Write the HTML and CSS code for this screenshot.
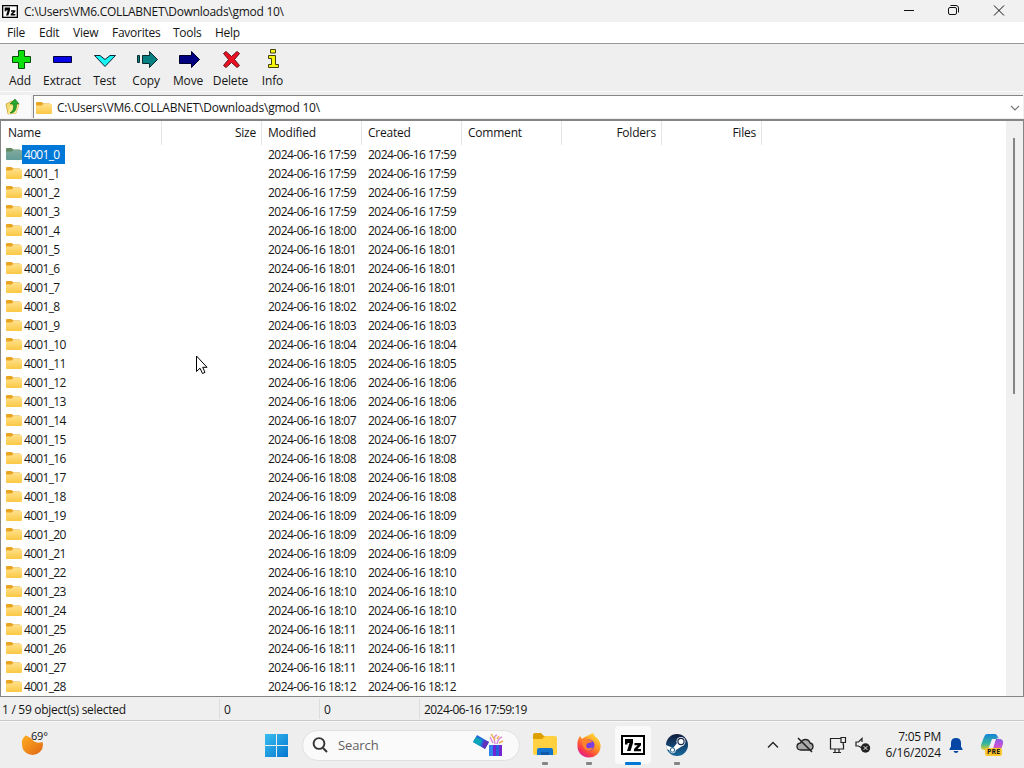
FILE: index.html
```html
<!DOCTYPE html>
<html lang="en">
<head>
<meta charset="utf-8">
<title>7-Zip</title>
<link rel="stylesheet" href="styles.css">
</head>
<body>
<svg class="defs" width="0" height="0">
  <defs>
    <linearGradient id="gold" x1="0" y1="0" x2="0" y2="1"><stop offset="0" stop-color="#ffe08a"/><stop offset="1" stop-color="#fbc843"/></linearGradient>
    <linearGradient id="teal" x1="0" y1="0" x2="0" y2="1"><stop offset="0" stop-color="#80a99c"/><stop offset="1" stop-color="#649c98"/></linearGradient>
    <symbol id="folder" viewBox="0 0 16 14"><path d="M0 2Q0 1 1 1H5.5L7.5 2.500H14V7H0Z" fill="#e9a520"/><path d="M0 4.600H5.6L7.3 3H15Q16 3 16 4V12Q16 13 15 13H1Q0 13 0 12Z" fill="url(#gold)"/></symbol>
    <symbol id="folder-sel" viewBox="0 0 16 14"><path d="M0 2Q0 1 1 1H5.5L7.5 2.500H14V7H0Z" fill="#638b60"/><path d="M0 4.600H5.6L7.3 3H15Q16 3 16 4V12Q16 13 15 13H1Q0 13 0 12Z" fill="url(#teal)"/></symbol>
    <symbol id="sevenzip" viewBox="0 0 24 20"><rect x="1" y="1" width="22" height="18" fill="#fff" stroke="#000" stroke-width="2"/><path d="M4 4H12V8L9.5 16H6L8.5 8H6.5V9.5H4Z" fill="#000"/><path d="M13.5 8H20V10.3L16.5 14H20V16.2H13V14L16.7 10.2H13.5Z" fill="#000"/></symbol>
  </defs>
</svg>
<div class="desktop">
  <header class="titlebar">
    <svg class="app-icon" width="16" height="13" viewBox="0 0 24 20" preserveAspectRatio="none"><use href="#sevenzip"/></svg>
    <span class="title">C:\Users\VM6.COLLABNET\Downloads\gmod 10\</span>
    <svg class="winctl" width="104" height="22" fill="none" stroke="#111" stroke-width="1"><path d="M4 10.500H14"/><path d="M50 7.500H55Q56.500 7.500 56.500 9V13Q56.500 14.500 55 14.500H50Q48.500 14.500 48.500 13V9Q48.500 7.500 50 7.500M50.500 5.500H56Q58.500 5.500 58.500 8V12.500"/><path d="M94 5.500L104 15.500M104 5.500L94 15.500"/></svg>
  </header>
  <nav class="menubar"><span class="m-file">File</span><span class="m-edit">Edit</span><span class="m-view">View</span><span class="m-fav">Favorites</span><span class="m-tools">Tools</span><span class="m-help">Help</span></nav>
  <div class="toolbar">
    <div class="tool t-add"><svg width="24" height="22"><path d="M9.500 1.500H15.500V7.500H21.500V13.500H15.500V19.500H9.500V13.500H3.500V7.500H9.500Z" fill="#0ee00e" stroke="#064d06"/></svg><span>Add</span></div>
    <div class="tool t-extract"><svg width="24" height="22"><path d="M4.500 7.500H22.500V13.500H4.500Z" fill="#0505e8" stroke="#00003c"/></svg><span>Extract</span></div>
    <div class="tool t-test"><svg width="24" height="22"><path d="M1.500 6.500H7L12 10.500L17 6.500H22.500L12 17.500Z" fill="#16f4f4" stroke="#123"/></svg><span>Test</span></div>
    <div class="tool t-copy"><svg width="24" height="22" fill="#068080" stroke="#052d2d"><path d="M3.500 6.500H5.500V13.500H3.500ZM8.500 6.500H15.500V2.500L23.500 10.500L15.500 18.500V14.500H8.500Z"/></svg><span>Copy</span></div>
    <div class="tool t-move"><svg width="24" height="22"><path d="M3.500 6.500H15.500V2.500L23.500 10.500L15.500 18.500V14.500H3.500Z" fill="#000080" stroke="#00002c"/></svg><span>Move</span></div>
    <div class="tool t-delete"><svg width="24" height="22"><path d="M5.500 4.500L8 2.500L13.500 7.500L19 2.500L21.500 4.500L16.500 10.500L21.500 16.500L19 18.500L13.500 13.500L8 18.500L5.500 16.500L10.500 10.500Z" fill="#ed1021" stroke="#69101a"/></svg><span>Delete</span></div>
    <div class="tool t-info"><svg width="24" height="22" fill="#f5f510" stroke="#444006"><path d="M10.500 .5H15.500V4H10.500ZM8.500 6.500H15.500V15.500H18.500V18.500H8.500V15.500H11.500V9.500H8.500Z"/></svg><span>Info</span></div>
  </div>
  <div class="address">
    <div class="up"><svg width="16" height="18" viewBox="0 0 16 18"><path d="M1 6L7 3L14 6L11 15L3 16Z" fill="#f2dc72" stroke="#c69a30" stroke-width=".7"/><path d="M3 16L5 8L14 6L11 15Z" fill="#ffea8c"/><path d="M5 15Q10 12 8 6H5L10 1L14 6H11.500Q12 13 7 15Z" fill="#27a52e" stroke="#147218" stroke-width=".6"/></svg></div>
    <div class="combo"><svg width="16" height="14"><use href="#folder"/></svg><span>C:\Users\VM6.COLLABNET\Downloads\gmod 10\</span><svg class="chev" width="10" height="6" fill="none" stroke="#777" stroke-width="1.200"><path d="M1 1L5 5L9 1"/></svg></div>
  </div>
  <main class="list">
    <div class="listbody">
      <div class="head"><span>Name</span><span class="r">Size</span><span>Modified</span><span>Created</span><span>Comment</span><span class="r">Folders</span><span class="r">Files</span></div>
      <div class="rows" id="rows"></div>
    </div>
    <div class="scroll"><div class="thumb"></div></div>
  </main>
  <footer class="status"><span>1 / 59 object(s) selected</span><span>0</span><span>0</span><span>2024-06-16 17:59:19</span></footer>
  <div class="taskbar">
    <div class="weather"><svg width="24" height="24"><defs><linearGradient id="sun" x1="0" y1="0" x2="1" y2="1"><stop offset="0" stop-color="#ffae22"/><stop offset="1" stop-color="#df6614"/></linearGradient></defs><path d="M4.500 3.500Q0 7 1 13A10.500 10 0 0 0 22 13L21.500 10Q16 12 12.500 9Q10 5 4.500 3.500Z" fill="url(#sun)"/></svg><span class="deg">69°</span></div>
    <svg class="start" width="23" height="23"><defs><linearGradient id="win" x1="0" y1="0" x2="1" y2="1"><stop offset="0" stop-color="#38bdf0"/><stop offset="1" stop-color="#0576cf"/></linearGradient></defs><path d="M0 0H11V11H0ZM12 0H23V11H12ZM0 12H11V23H0ZM12 12H23V23H12Z" fill="url(#win)"/></svg>
    <div class="search">
      <svg width="16" height="16" fill="none" stroke="#333" stroke-width="1.900"><circle cx="7" cy="6.500" r="5.400"/><path d="M11 11L15 15"/></svg><span>Search</span>
      <svg class="gift" width="32" height="24"><path d="M4 2L16 9L12 16L0 9Z" fill="#2269d9"/><path d="M3 4L9 7L7 13L0 9Z" fill="#0aa5b9"/><path d="M11 7L16 9L12 16L9 14Z" fill="#6130bd"/><path d="M16 12H29V23H16Z" fill="#2760dd"/><path d="M20 12H23V23H20ZM26 12H29V23H26Z" fill="#7525cf"/><path d="M16 12H20V23H16Z" fill="#3183ee"/><path d="M20 10L17 4M22 11Q20 3 24 2M24 11Q25 5 29 4" fill="none" stroke="#d88fd8" stroke-width="1.500"/><path d="M22 7L18 1M26 10L30 8M24 6L26 3" stroke="#efb657" stroke-width="1.400"/></svg>
    </div>
    <div class="apps">
      <div class="app"><svg width="26" height="26"><path d="M1 3Q1 1 3 1H9L12 4H22V10H1Z" fill="#dea000"/><path d="M1 7H10L13 4H23Q25 4 25 6V21Q25 23 23 23H3Q1 23 1 21Z" fill="#ffd140"/><path d="M5 23V18Q5 16 7 16H19Q21 16 21 18V23Z" fill="#1473cc"/><path d="M9 23V20H17V23" fill="#0e5aa8"/></svg></div>
      <div class="app"><svg width="26" height="26"><defs><linearGradient id="ff" x1=".9" y1="0" x2=".2" y2="1"><stop offset="0" stop-color="#ffec40"/><stop offset=".45" stop-color="#ff9224"/><stop offset=".75" stop-color="#fd3f43"/><stop offset="1" stop-color="#d817a1"/></linearGradient></defs><path d="M13 3L17 1Q18 4 21 6Q25 10 24.500 15A11.500 11 0 0 1 1.500 14Q1 8 4 4L6 7L9 5Z" fill="url(#ff)"/><circle cx="13" cy="13" r="5.500" fill="#793fe0"/><path d="M6 7Q10 5 13 8L17 9Q15 11 12 11Q9 13 11 16Q14 17 17 15Q15 20 10 18Q5 14 6 7Z" fill="#ff842c"/></svg></div>
      <div class="app active"><svg width="24" height="20"><use href="#sevenzip"/></svg></div>
      <div class="app"><svg width="24" height="24"><defs><linearGradient id="steam" x1="0" y1="0" x2="0" y2="1"><stop offset="0" stop-color="#101b3d"/><stop offset="1" stop-color="#17699d"/></linearGradient></defs><circle cx="12" cy="12" r="11" fill="url(#steam)"/><path d="M1 12L8 15L13 9L19 12L11 17Q10 21 6.500 20Q4.500 19 4 17L1.500 16Z" fill="#fff"/><circle cx="16" cy="8.500" r="4.500" fill="#fff"/><circle cx="16" cy="8.500" r="3.100" fill="#fff" stroke="#17294e" stroke-width="1.200"/><circle cx="7.500" cy="17" r="2.200" fill="none" stroke="#246491"/></svg></div>
    </div>
    <div class="tray">
      <svg class="up-chev" width="12" height="8" fill="none" stroke="#222" stroke-width="1.300"><path d="M1 6.500L6 1.500L11 6.500"/></svg>
      <svg class="cloud" width="18" height="16" fill="#aaa" stroke="#222" stroke-width="1.300"><path d="M5 13Q1 13 1 9.500Q1 6.500 4.500 6Q6 2.500 9.500 2.500Q13 2.500 14 6Q17 6.500 17 9.500Q17 13 13 13Z"/><path d="M2 1L16 15" stroke-width="1.600"/></svg>
      <svg class="net" width="18" height="18" fill="none" stroke="#222" stroke-width="1.200"><path d="M12 2.500H1.500V13H14.500V8.500M4 16.500H12M6 13V16M10 13V16M12 1.500H16.500V6.500H12ZM14.200 6.500V9"/></svg>
      <svg class="vol" width="16" height="17" fill="none" stroke="#222" stroke-width="1.200"><path d="M7 11L3.500 9H1V5H3.500L7 1.500V5"/><circle cx="10.500" cy="11" r="4.700" fill="#222" stroke="none"/><path d="M8.600 9.100L12.400 12.900M12.400 9.100L8.600 12.900" stroke="#eee" stroke-width="1"/></svg>
      <div class="clock"><span>7:05 PM</span><span class="date">6/16/2024</span></div>
      <svg class="bell" width="14" height="17"><path d="M2 6Q2 1 7 1T12 6V9.500L13.500 12V13H.5V12L2 9.500ZM4.500 14H9.500Q9 16 7 16T4.500 14Z" fill="#0647a5"/></svg>
      <div class="copilot"><svg width="24" height="24"><defs><linearGradient id="cp1" x1="0" y1="0" x2="0" y2="1"><stop offset="0" stop-color="#1683d8"/><stop offset=".6" stop-color="#37b69e"/><stop offset="1" stop-color="#e1cb26"/></linearGradient><linearGradient id="cp2" x1="0" y1="0" x2="0" y2="1"><stop offset="0" stop-color="#5963e5"/><stop offset=".5" stop-color="#bd53dc"/><stop offset="1" stop-color="#ff6c62"/></linearGradient></defs><path d="M7 1H15Q17 1 18 5L16 6H12L8 17H5Q0 17 1 12L4 4Q5 1 7 1Z" fill="url(#cp1)"/><path d="M14 1Q17 1 18 5L19 6H16L12 18H6Q7 22 10 22H15Q19 22 20 19L23 11Q24 6 19 6Q17 1 14 1Z" fill="url(#cp2)"/><path d="M12 8H15L13 15H10Z" fill="#f3edf7"/></svg><span class="pre">PRE</span></div>
    </div>
  </div>
  <svg class="cursor" width="13" height="20"><path d="M1.500 1V16.500L5 13.200L7.500 18.500L10 17.400L7.700 12.300H12Z" fill="#fff" stroke="#000"/></svg>
</div>
<script src="rows.js"></script>
</body>
</html>
```
FILE: styles.css
```css
* { box-sizing: border-box; }
body { margin: 0; background: #efefef; color: #151515; font: 12px/16px "Open Sans", "Noto Sans", sans-serif; letter-spacing: -.5px; }
svg { display: block; flex: none; }
.defs { position: absolute; }
.desktop { position: relative; width: 1024px; height: 768px; overflow: hidden; display: flex; flex-direction: column; white-space: nowrap; }
.titlebar { height: 22px; flex: none; background: #f1f1f1; display: flex; align-items: center; padding: 1px 0 0 2px; }
.app-icon { margin-top: -1px; }
.title { margin-left: 6px; letter-spacing: -.28px; }
.winctl { margin: -1px 20px 0 auto; overflow: visible; }
.menubar { height: 22px; flex: none; background: #fff; border-bottom: 1px solid #999; display: flex; align-items: center; padding-left: 7px; letter-spacing: -.25px; }
.m-file { width: 32px; }
.m-edit { width: 34px; }
.m-view { width: 39px; }
.m-fav { width: 61px; }
.m-tools { width: 42px; }
.toolbar { height: 48px; flex: none; display: flex; padding: 5px 0 0; border-bottom: 1px solid #fafafa; }
.tool { display: flex; flex-direction: column; align-items: center; width: 42px; letter-spacing: -.15px; }
.tool svg { margin-bottom: 2px; }
.t-add { width: 40px; }
.t-add svg { transform: translateX(1px); }
.t-extract { width: 44px; }
.t-extract svg, .t-delete svg, .t-info svg { transform: translateX(-1px); }
.t-test { width: 41px; }
.t-delete { width: 43px; }
.t-info { width: 41px; }
.address { height: 27px; flex: none; display: flex; padding-top: 3px; }
.up { width: 31px; height: 23px; background: #fafafa; padding: 3px 0 0 5px; margin-right: 2px; }
.combo { flex: 1; height: 23px; margin-right: 1px; border: 1px solid #858585; border-width: 1px 0 0 1px; background: #fff; display: flex; align-items: center; padding: 1px 3px 0 2px; letter-spacing: -.2px; }
.combo span { margin-left: 5px; }
.chev { margin-left: auto; }
.list { height: 578px; flex: none; display: flex; background: #fff; border: 1px solid #858585; border-top-width: 2px; }
.listbody { flex: 1; overflow: hidden; }
.head { height: 24px; display: grid; grid-template-columns: 161px 100px 100px 100px 100px 100px 100px; letter-spacing: -.22px; }
.head span { border-right: 1px solid #e5e5e5; padding: 4px 5px 0 6px; }
.head span:first-child { padding-left: 7px; }
.head .r { text-align: right; }
.row { height: 19px; display: grid; grid-template-columns: 261px 100px 100px; line-height: 20px; }
.row > span { padding-left: 6px; letter-spacing: -.52px; }
.name { display: flex; padding-left: 5px; letter-spacing: -.68px; }
.name svg { margin-top: 2px; }
.name span { padding: 0 0 0 2px; height: 19px; }
.name.sel span { width: 43px; background: #0078d7; color: #fff; }
.scroll { width: 17px; background: #f0f0f0; padding: 17px 0 0 7px; }
.thumb { width: 2px; height: 256px; background: #858585; }
.status { height: 24px; flex: none; display: grid; grid-template-columns: 220px 100px 100px 1fr; align-items: center; border-bottom: 1px solid #c9c9c9; letter-spacing: -.29px; }
.status span { padding: 1px 0 0 4px; border-right: 1px solid #ddd; height: 20px; line-height: 20px; }
.status span:first-child { padding-left: 2px; }
.status span:last-child { border: 0; letter-spacing: -.55px; }
.taskbar { flex: 1; display: flex; align-items: center; background: #eee; border-top: 1px solid #f9f9f9; padding-bottom: 4px; }
.weather { width: 265px; height: 46px; padding: 10px 0 0 21px; position: relative; }
.deg { position: absolute; left: 31px; top: 6px; font-size: 11px; line-height: 16px; letter-spacing: -.2px; }
.search { width: 218px; height: 31px; margin-left: 14px; border: 1px solid #e1e1e1; border-radius: 16px; background: #fafafa; display: flex; align-items: center; padding: 0 14px 0 9px; }
.search span { margin-left: 10px; font-size: 13px; color: #606060; letter-spacing: -.1px; }
.gift { margin-left: auto; }
.apps { display: flex; margin-left: 7px; gap: 8px; }
.app { width: 36px; height: 38px; position: relative; display: flex; align-items: center; justify-content: center; }
.app::after { content: ""; position: absolute; bottom: -1px; width: 6px; height: 3px; border-radius: 1px; background: #858585; }
.app.active { background: #fafafa; border-radius: 4px; }
.app.active::after { width: 16px; background: #0078d7; }
.tray { margin-left: 72px; display: flex; align-items: center; }
.cloud { margin-left: 17px; }
.net { margin-left: 15px; }
.vol { margin-left: 8px; }
.clock { width: 70px; display: flex; flex-direction: column; text-align: right; letter-spacing: -.3px; }
.date { letter-spacing: -.15px; }
.bell { margin-left: 8px; }
.copilot { margin-left: 17px; position: relative; }
.pre { position: absolute; left: 5px; top: 15px; padding: 0 2px; border-radius: 2px; background: #ffc72e; font: bold 7px/8px "Open Sans", sans-serif; letter-spacing: .1px; }
.cursor { position: absolute; left: 195px; top: 355px; }
```
FILE: rows.js
```js
const times = ['17:59','17:59','17:59','17:59','18:00','18:01','18:01','18:01','18:02','18:03','18:04','18:05','18:06','18:06','18:07','18:08','18:08','18:08','18:09','18:09','18:09','18:09','18:10','18:10','18:10','18:11','18:11','18:11','18:12'];
const created = { 15: '18:07', 18: '18:08' };
document.getElementById('rows').innerHTML = times.map((time, i) =>
  `<div class="row"><div class="name${i ? '' : ' sel'}"><svg width="16" height="16"><use href="#folder${i ? '' : '-sel'}" width="16" height="14"/></svg><span>4001_${i}</span></div><span>2024-06-16 ${time}</span><span>2024-06-16 ${created[i] || time}</span></div>`
).join('');
```
